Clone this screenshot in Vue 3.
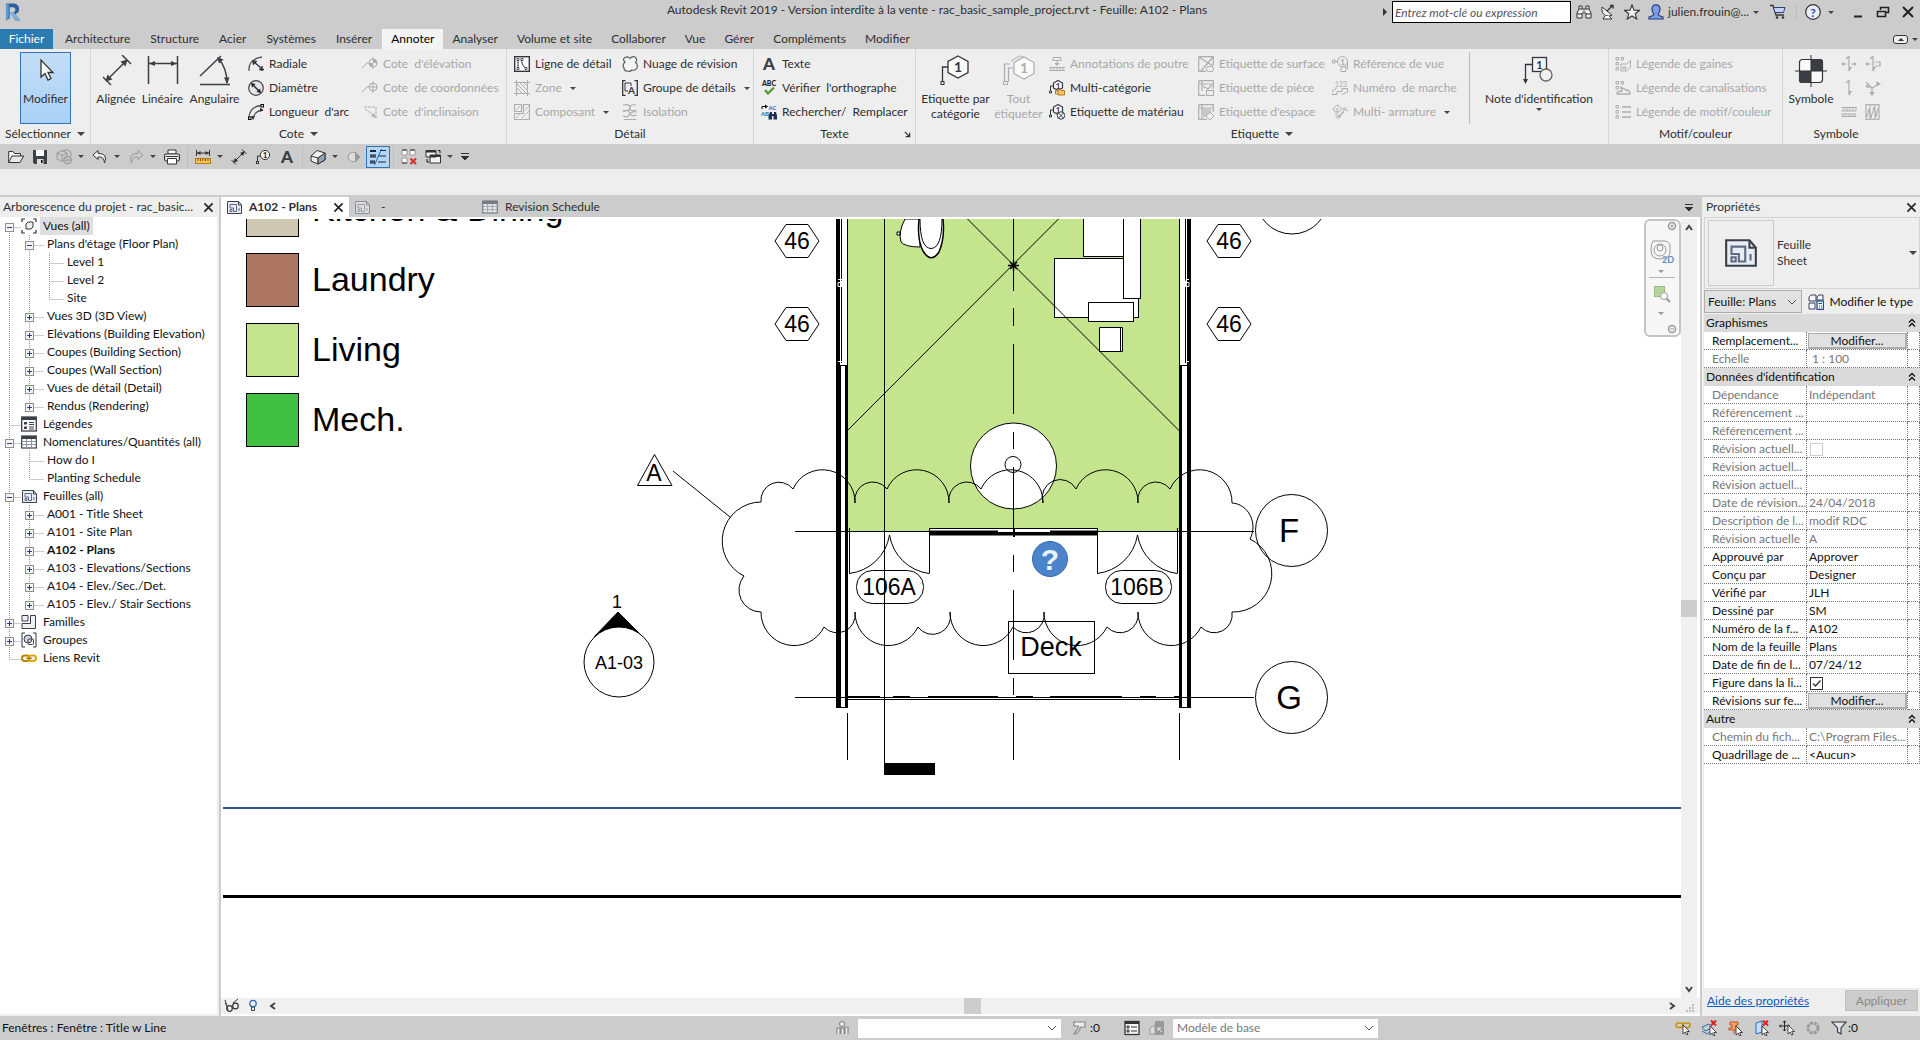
<script setup>
import { ref } from 'vue'

const tabs = ['Architecture', 'Structure', 'Acier', 'Systèmes', 'Insérer', 'Annoter', 'Analyser', 'Volume et site', 'Collaborer', 'Vue', 'Gérer', 'Compléments', 'Modifier']
const activeTab = ref('Annoter')

const D = '#33373d'
const G = '#adadad'
const hex = (cx, cy, w, h, c, sw = 1.2) =>
  `<path d="M${cx} ${cy - h}L${cx + w} ${cy - h / 2}V${cy + h / 2}L${cx} ${cy + h}L${cx - w} ${cy + h / 2}V${cy - h / 2}Z" fill="#fafafa" stroke="${c}" stroke-width="${sw}"/>`
const one = (x, y, s, c) => `<text x="${x}" y="${y}" font-size="${s}" font-weight="700" fill="${c}" text-anchor="middle">1</text>`
const sheet = (c, f, l) => `<path d="M1.500 3.500V14.500H15.500V6L12.500 2.500H1.500Z" fill="${f}" stroke="${c}"/><path d="M12.500 2.500V6H15" fill="none" stroke="${c}"/><path d="M4 5.500H10.500V12.500H7.500V9H4Z M4 10.500H6V12.500H4Z M13 9V12" fill="none" stroke="${l}"/>`
const cursor = (x, y) => `<path transform="translate(${x} ${y})" d="M0 0V9L2.200 7L3.600 10L5 9.400L3.700 6.500H6.500Z" fill="#fff" stroke="#222" stroke-width=".8"/>`
const cross = (x, y) => `<path d="M${x} ${y}L${x + 5} ${y + 5}M${x + 5} ${y}L${x} ${y + 5}" stroke="#d22" stroke-width="2"/>`

const I = {
  logo: `<path d="M1 0H10Q15 1 15 6Q15 10 11 11L16 18H11L5 9H9Q11 9 11 6.500Q11 4 8 4H5V16L1 18Z" fill="#2c5f9e"/><path d="M1 0H4V16L1 18Z" fill="#5d9bd5"/><path d="M5 9H9L16 18H11Z" fill="#7fb0dc"/>`,
  binoc: `<path d="M3 2H6V5H10V2H13V5L15 9V14H10V9H6V14H1V9L3 5Z" fill="#eee" stroke="#333"/><path d="M1 10H6M10 10H15M3 5H6M10 5H13M7 7H9" stroke="#333"/>`,
  dish: `<path d="M2 3Q1 9 5.500 11.500Q9 13 12 11Z" fill="#eee" stroke="#333"/><path d="M7 7L12 2M10 1.500H13V4.500" fill="none" stroke="#333" stroke-width="1.400"/><path d="M5 12L3 15H12L9 12" fill="#fff" stroke="#333"/>`,
  star: `<path d="M8 1L10 6.200L15.500 6.400L11.200 9.800L12.700 15L8 12L3.300 15L4.800 9.800L.5 6.400L6 6.200Z" fill="#f4f4f4" stroke="#333" stroke-width="1.100"/>`,
  user: `<path d="M8 .8Q12 .8 12 5Q12 8 10 10Q10 11.500 15 13V15H1V13Q6 11.500 6 10Q4 8 4 5Q4 .8 8 .8Z" fill="#7e9fe8" stroke="#2b3f78" stroke-width="1.200"/>`,
  cart: `<path d="M0 1.500H3L6 11H14" fill="none" stroke="#333" stroke-width="1.300"/><path d="M3.500 3.500H15L13.500 8.500H5Z" fill="#c6d2f5" stroke="#2b3f78"/><circle cx="7" cy="13.500" r="1.300" fill="#333"/><circle cx="13" cy="13.500" r="1.300" fill="#333"/>`,
  help: `<circle cx="8" cy="8" r="7.300" fill="#e9eef8" stroke="#333" stroke-width="1.200"/><text x="8" y="12.500" font-size="12" font-weight="700" fill="#1e4fa5" text-anchor="middle">?</text>`,
  min: `<path d="M4 12.500H12" stroke="#222" stroke-width="2"/>`,
  restore: `<path d="M5.500 6V3.500H13.500V8.500H11M2.500 7.500H10.500V12.500H2.500Z" fill="none" stroke="#222" stroke-width="1.600"/>`,
  close: `<path d="M3 3L13 13M13 3L3 13" stroke="#222" stroke-width="2"/>`,
  modify: `<path d="M11 5V22L15 18.500L18 25L21 23.500L18 17.500H23Z" fill="#fff" stroke="#333" stroke-width="1.300"/>`,
  aligned: `<path d="M6 26L27 5M3 22L11 30M22 0L31 9" stroke="#3b3f45" stroke-width="1.500"/><path d="M5.500 26.500L7.500 19.500L12.500 24.500ZM27.500 4.500L25.500 11.500L20.500 6.500Z" fill="#3b3f45"/>`,
  linear: `<path d="M1.500 1V29M30.500 1V29M2 8.500H30" stroke="#3b3f45" stroke-width="1.500"/><path d="M2 8.500L8 6V11ZM30 8.500L24 6V11Z" fill="#3b3f45"/>`,
  angular: `<path d="M1 29.500H31M1 21L22 1M19 3Q28 13 28 28" fill="none" stroke="#3b3f45" stroke-width="1.500"/><path d="M18 2L24.500 4.500L20 8.500ZM28 29L25 22.500H30.500Z" fill="#3b3f45"/>`,
  tag: `<path d="M8 12H2.500V27" fill="none" stroke="${D}" stroke-width="1.300"/><rect x="1" y="26.500" width="3" height="3" fill="#eee" stroke="${D}"/>${hex(18, 12, 10, 11, D, 1.3)}${one(18, 17, 14, D)}`,
  tagall: `<path d="M7 9H1.500V26M10 13H5.500V27" fill="none" stroke="${G}" stroke-width="1.200"/><rect x=".5" y="26.500" width="4" height="3" fill="#eee" stroke="${G}"/><path d="M8 6L17 .8L25 4" fill="none" stroke="${G}"/>${hex(21, 13, 10, 11, G)}${one(21, 18, 14, G)}`,
  keynote: `<path d="M9 9.500H2.500V26" fill="none" stroke="${D}" stroke-width="1.300"/><path d="M2.500 29L0 24H5Z" fill="${D}"/><rect x="9.500" y="2.500" width="14" height="14" fill="#f4f4f4" stroke="${D}" stroke-width="1.300"/>${one(16.5, 13.5, 11, D)}<circle cx="23" cy="20" r="6" fill="#f0f0f0" stroke="#666" stroke-width="1.300"/>`,
  symbol: `<rect x="4.500" y="4.500" width="23" height="23" rx="3" fill="#f8f8f8" stroke="#333" stroke-width="1.200"/><path d="M16 4H25Q28 4 28 7V16H16ZM16 16V28H7Q4 28 4 25V16Z" fill="#3a3d42"/><path d="M16 0V32M0 16H32" stroke="#333"/>`,
  radial: `<path d="M1 15Q0 3 14 1" fill="none" stroke="#555" stroke-width="1.300"/><path d="M5 5L14 13M14 10V15M11 13.500H16" stroke="${D}" stroke-width="1.400"/><path d="M4 4L9.500 5L5 9.500Z" fill="${D}"/>`,
  diameter: `<circle cx="8" cy="8" r="7.300" fill="#e4e4e4" stroke="#444" stroke-width="1.200"/><path d="M4 4L12 12" stroke="#222" stroke-width="1.400"/><path d="M3 3L7.500 4L4 7.500ZM13 13L8.500 12L12 8.500Z" fill="#222"/>`,
  arc: `<path d="M1 13Q2 2 14 1.500M5 15Q6 7 15 6" fill="none" stroke="#555" stroke-width="1.300"/><rect x="13" y=".5" width="2.500" height="2.500" fill="#fff" stroke="#000"/><rect x=".5" y="13" width="2.500" height="2.500" fill="#fff" stroke="#000"/><path d="M15.500 6L12 3.800V8ZM5 16L3 12H7Z" fill="#333"/>`,
  spotElev: `<path d="M0 12L5 7H16M11 1V13" fill="none" stroke="${G}"/><circle cx="11" cy="7" r="4" fill="#eee" stroke="${G}"/><path d="M11 3A4 4 0 0 1 15 7H11ZM11 11A4 4 0 0 1 7 7H11Z" fill="${G}"/>`,
  spotCoord: `<path d="M0 12L5 7H16M11 1V13" fill="none" stroke="${G}"/><circle cx="11" cy="7" r="4" fill="none" stroke="${G}"/>`,
  slope: `<path d="M2 3H14V14M3 5L13 12" fill="none" stroke="${G}" stroke-dasharray="3 1"/><path d="M14 14L9 12L12 9Z" fill="${G}"/>`,
  detailLine: `<rect x=".7" y=".7" width="14.600" height="14.600" fill="#fff" stroke="${D}" stroke-width="1.400"/><path d="M4 3V13M7 3Q8 10 12 13" fill="none" stroke="${D}"/><path d="M3 2.500H5V4.500H3ZM3 11.500H5V13.500H3ZM7 2.500H9V4.500H7ZM11 11.500H13V13.500H11Z" fill="#fff" stroke="${D}" stroke-width=".8"/>`,
  region: `<path d="M0 2.500H16M0 13.500H16M2.500 0V16M13.500 0V16" stroke="${G}"/><path d="M3 8L8 13M3 4L12 13M6 3L13 10M10 3L13 6" stroke="${G}"/>`,
  comp: `<path d="M.5 .5H7.500V7.500H.5ZM9.500 .5H15.500V15.500H.5V9.500H9.500Z" fill="none" stroke="${G}" stroke-width="1.200"/><path d="M2 6L6 2M11 6L15 2M2 14L6 10M8 14L15 7" stroke="${G}" stroke-width=".8"/>`,
  cloud: `<path d="M3 6Q0 3 3 1.500Q6 0 8 2.500Q10 0 13 1Q16 3 13.500 6.500Q16 8 15 12Q13 15 10 14Q8 16 5 15Q2 15 2 12Q0 9 3 6Z" fill="#f4f4f4" stroke="#5a5d62" stroke-width="1.200"/>`,
  group: `<path d="M3.500 .7H.7V15.300H3.500M12.500 .7H15.300V15.300H12.500" fill="none" stroke="${D}" stroke-width="1.300"/><path d="M3 3H9V6M3 3V11H6" fill="none" stroke="${D}"/><text x="9.500" y="13.500" font-size="10" font-weight="700" fill="${D}" text-anchor="middle">A</text>`,
  insul: `<path d="M1 1.500Q8 -1 8 4Q8 8 14 6M1 8Q6 5 8 9Q9 13 15 11M14 1Q8 0 8 4Q7 8 1 6M15 8Q9 7 7 11Q6 14 1 12M2 15.500H14" fill="none" stroke="${G}" stroke-width="1.100"/>`,
  text: `<text x="8" y="14" font-size="17" font-weight="900" fill="#3a3d42" text-anchor="middle">A</text>`,
  abc: `<text x="8" y="6" font-size="7" font-weight="900" fill="#222" text-anchor="middle">ABC</text><path d="M4 10L7 13.500L13 7.500" fill="none" stroke="#4d9a2a" stroke-width="2.200"/>`,
  find: `<text x="11.500" y="6" font-size="6" font-weight="700" fill="#2a68c0" text-anchor="middle">AC</text><text x="4" y="12" font-size="6" font-weight="700" fill="#2a68c0" text-anchor="middle">AB</text><path d="M1 5V2.500H4" fill="none" stroke="#000"/><path d="M7 2.500L4 .5V4.500Z"/><path d="M9 8H11V10H13V8H15L16 12V15.500H12.500V12H11V15.500H7.500V12Z" fill="#1d2f50"/>`,
  beam: `<path d="M4 1.500H12V4.500H4ZM8 5V9M0 11.500H16M0 14.500H16" fill="none" stroke="${G}"/><path d="M8 10L5.500 7H10.500Z" fill="${G}"/><path d="M1 13H15" stroke="${G}" stroke-dasharray="2 1"/>`,
  multi: `<path d="M5 6H1.500V12" fill="none" stroke="${D}"/><path d="M.5 11H2.500V13H.5Z" fill="#fff" stroke="${D}"/>${hex(9, 5.5, 4.5, 5, D)}${one(9, 9, 8, D)}<path d="M6.500 8V14H9M6.500 11H9" fill="none" stroke="#b8741a"/><path d="M9 9.500H11L12 10.500H15.500V15H9Z" fill="#f6c667" stroke="#b8741a"/>`,
  mat: `<path d="M5 6H1.500V12" fill="none" stroke="${D}"/><path d="M.5 11H2.500V13H.5Z" fill="#fff" stroke="${D}"/>${hex(9, 5.5, 4.5, 5, D)}${one(9, 9, 8, D)}<circle cx="12" cy="11.500" r="3.700" fill="#fff" stroke="${D}"/><path d="M9.500 9L14.500 14M14.500 9L9.500 14" stroke="${D}"/>`,
  surf: `<path d="M.7 .7H15.300V9M.7 .7V15.300H8M1 1L15 10M15 1L3 15" fill="none" stroke="${G}" stroke-width="1.200"/><rect x="8.500" y="10.500" width="7" height="5" rx="2" fill="#eee" stroke="${G}"/>`,
  room: `<path d="M.7 .7H15.300V9M.7 .7V15.300H7M4 1V11M1 4H15M5 6L10 9L14 5" fill="none" stroke="${G}" stroke-width="1.200"/><rect x="8.500" y="10.500" width="7" height="5" fill="#eee" stroke="${G}"/>`,
  space: `<path d="M.7 .7H15.300V8M.7 .7V15.300H9M4 1V15M1 4H15" fill="none" stroke="${G}" stroke-width="1.200"/><path d="M5 5H13V9L9 13H5Z" fill="${G}" opacity=".6"/><path d="M12 8L16 12L12 16L8 12Z" fill="#eee" stroke="${G}"/>`,
  viewref: `<path d="M.5 4H3V7H.5ZM3 5.500H6" fill="none" stroke="${G}"/><circle cx="10.500" cy="5.500" r="5" fill="none" stroke="${G}"/>${one(10.5, 9, 8, G)}<path d="M9 11H14V15.500H9ZM15.500 6V13" fill="#eee" stroke="${G}"/>`,
  tread: `<path d="M0 14.500H5V11.500H10V8.500H15.500V12L10 14.500M0 14.500V11L4 9V7" fill="none" stroke="${G}"/><text x="9" y="7" font-size="7" fill="${G}" text-anchor="middle">123</text>`,
  rebar: `<path d="M5 .8L9.500 5L5 9.500L.8 5Z" fill="none" stroke="${G}"/>${one(5, 7.5, 6, G)}<path d="M6 15L14 3M3 10L9 13M10 4L16 7M4 14L12 8" stroke="${G}"/>`,
  duct: `<path d="M1 1.500H3.500V4H1ZM6 1.500H8.500V4H6ZM1 6.500H3.500V9H1ZM1 11.500H3.500V14H1Z" fill="none" stroke="${G}"/><path d="M6 8H12L15.500 4.500V11L12 15H6ZM8 11H11V13H8Z" fill="none" stroke="${G}"/>`,
  pipe: `<path d="M1 1.500H3.500V4H1ZM6 1.500H8.500V4H6ZM1 6.500H3.500V9H1Z" fill="none" stroke="${G}"/><path d="M6 7L11 10Q15 10 15 14H2Q2 11 7 11Z" fill="none" stroke="${G}" stroke-width="1.300"/>`,
  legend: `<path d="M1 1.500H3.500V4H1ZM1 6.500H3.500V9H1ZM1 11.500H3.500V14H1Z" fill="none" stroke="${G}"/><path d="M7 3H16M7 8H16M7 13H16" stroke="${G}" stroke-width="1.300"/>`,
  s1: `<path d="M8 0V15M1 8H6M10 8H15M5 3L8 0" stroke="${G}" stroke-width="1.200"/><path d="M0 8L3 6V10ZM16 8L13 6V10ZM8 16L11 11H8Z" fill="${G}"/>`,
  s2: `<path d="M8 0V15M1 8H6M10 6H15V10H10M5 3L8 0" fill="none" stroke="${G}" stroke-width="1.200"/><path d="M0 8L3 6V10ZM8 16L11 11H8Z" fill="${G}"/>`,
  s3: `<path d="M8 0V15M5 3L8 0" stroke="${G}" stroke-width="1.200"/><path d="M8 16L11 11H8Z" fill="${G}"/>`,
  s4: `<path d="M7 15V8L1 2M7 8L14 4" fill="none" stroke="${G}" stroke-width="1.200"/><path d="M16 4L11 1L12 6ZM0 7L5 8L3 4ZM7 16L10 12H4Z" fill="${G}"/>`,
  s5: `<path d="M.5 3.500H15.500M.5 12.500H15.500M.5 7H15M.5 10H15" stroke="${G}"/><path d="M3 3V7M6 3V7M9 3V7M12 3V7M15 3V7M2 10V13M5 10V13M8 10V13M11 10V13M14 10V13" stroke="${G}"/>`,
  s6: `<rect x="1" y=".7" width="13" height="14.600" fill="none" stroke="${G}" stroke-width="1.200"/><path d="M5 1V15M10 1V15M2 13L4 5L6 14L9 3L11 13L13 4" fill="none" stroke="${G}"/>`,
  open: `<path d="M.7 13.500V2.500H5L6.500 4.500H12.500V7" fill="#f4f4f4" stroke="#333"/><path d="M.7 13.500L4 7H15.700L12 13.500Z" fill="#e8e8e8" stroke="#333"/>`,
  save: `<path d="M1 1H15V15H2.500L1 13.500Z" fill="#3b3f46"/><path d="M4 1H12V7H4Z" fill="#fff"/><path d="M5 10H11.500V15H5Z" fill="#ddd"/><path d="M9 11H10.500V14H9Z"/>`,
  sync: `<path d="M1 4L6 1.500L11 4V10L6 12.500L1 10ZM1 4L6 6.500L11 4M6 6.500V12M7 2L11 .5L15 3V7" fill="none" stroke="#999"/><circle cx="11.500" cy="11" r="4.500" fill="#a5a5a5"/><path d="M9 11Q11 7.500 14 10M14 12Q12 14.500 9.500 12.500" fill="none" stroke="#ddd"/>`,
  undo: `<path d="M6 1.500L1 6L6 10.500V8Q12 7 12.500 14Q16.500 4.500 6 4.300Z" fill="#f4f4f4" stroke="#333"/>`,
  redo: `<path d="M10 1.500L15 6L10 10.500V8Q4 7 3.500 14Q-.5 4.500 10 4.300Z" fill="none" stroke="#999"/>`,
  print: `<path d="M4 1H12V5H4Z" fill="#fff" stroke="#333"/><rect x=".6" y="5" width="14.800" height="7" rx="1.500" fill="#f2f2f2" stroke="#333" stroke-width="1.200"/><path d="M3.500 9.500H12.500V15H3.500Z" fill="#fff" stroke="#333"/><path d="M2 7.500H14" stroke="#333"/>`,
  measure: `<path d="M1.500 1V7M14.500 1V7M2 4H14" stroke="#333"/><path d="M2 4L5.500 2V6ZM14 4L10.500 2V6Z" fill="#333"/><rect x=".5" y="9.500" width="15" height="5" fill="#fbc24d" stroke="#b97a12"/><path d="M3 10V12M5.500 10V12M8 10V12M10.500 10V12M13 10V12" stroke="#7a4c00"/>`,
  alignedS: `<path d="M2.500 13.500L13.500 2.500M.5 11L5 15.500M11 .5L15.500 5" stroke="#333"/><path d="M2 14L4 9L7 12ZM14 2L12 7L9 4Z" fill="#333"/>`,
  tagS: `<path d="M6 7H2.500V13" fill="none" stroke="#333"/><rect x="1.500" y="12.500" width="2" height="2" fill="#fff" stroke="#333"/><circle cx="10" cy="6" r="4.600" fill="#f6f6f6" stroke="#333"/>${one(10, 9, 8, '#222')}`,
  home: `<path d="M1 7L7 1.500L15 4V11L8 15L1 12Z" fill="#f0f0f0" stroke="#333"/><path d="M1 7L8 9V15M8 9L15 4" fill="none" stroke="#333"/><path d="M8 9L15 4V11L8 15Z" fill="#8fa3bb" stroke="#333"/>`,
  section: `<circle cx="7" cy="8" r="4.800" fill="#ddd" stroke="#999"/><path d="M9 2.500L14.500 8L9 13.500Z" fill="#999"/>`,
  thin: `<path d="M0 1.500H6M0 2.500H6M0 6H6M0 7H6M0 8H6M0 12H5M0 13H5M0 14H5" stroke="#1c2535"/><path d="M10 1.500H16M9 7H16M8 13H16" stroke="#1c2535"/><path d="M11.500 0L4.500 16" stroke="#1c63b5"/>`,
  closeh: `<path d="M1 1H6V6H1ZM9 1H14V6H9ZM1 9H6V14H1Z" fill="#fff" stroke="#999"/><path d="M1 1H6M9 1H14M1 14H6" stroke="#333"/><path d="M9.500 9.500L15 15M15 9.500L9.500 15" stroke="#d0342c" stroke-width="2.200"/>`,
  switchw: `<path d="M1 1.500H11V8H1ZM5 6H15.500V14H5Z" fill="#f2f2f2" stroke="#333"/><path d="M1 2.500H11M5 7H15.500" stroke="#333" stroke-width="2"/><path d="M13 1.500H15V4M2 10V13H4" fill="none" stroke="#111"/>`,
  views: `<path d="M1 4V1H4M12 1H15V4M15 12V15H12M4 15H1V12" fill="none" stroke="#333" stroke-width="1.200"/><path d="M5 6L7 4H12V9L10 11H5Z" fill="#eee" stroke="#333"/>`,
  legends: `<rect x=".7" y="1" width="14.600" height="14" fill="#fff" stroke="#3a3f48" stroke-width="1.300"/><path d="M1 2.500H15" stroke="#3a3f48" stroke-width="3"/><path d="M3 6H6V8.500H3ZM3 10.500H6V13H3Z" fill="#3a3f48"/><path d="M8 6.500H13M8 8.500H13M8 11H13M8 13H13" stroke="#3a3f48"/>`,
  sched: `<rect x=".7" y="2" width="14.600" height="12" fill="#fff" stroke="#3a3f48" stroke-width="1.200"/><path d="M1 3.500H15" stroke="#3a3f48" stroke-width="3"/><path d="M1 7.500H15M1 10.500H15M5.500 5V14M10.500 5V14" stroke="#8b93a5"/>`,
  schedOff: `<rect x=".7" y="2" width="14.600" height="12" fill="#e4e4e4" stroke="#777c85" stroke-width="1.200"/><path d="M1 3.500H15" stroke="#777c85" stroke-width="3"/><path d="M1 7.500H15M1 10.500H15M5.500 5V14M10.500 5V14" stroke="#a5abb8"/>`,
  sheet: sheet('#3a3f48', '#e9ecf2', '#5e6b85'),
  sheetOff: sheet('#8a8f97', '#dcdcdc', '#9aa0aa'),
  fams: `<path d="M1 1.500H7V7H1ZM9.500 1.500H14.500V14.500H1V9.500H9.500Z" fill="#eef0f3" stroke="#3a3f48"/>`,
  groups: `<path d="M4 1H1V15H4M12 1H15V15H12" fill="none" stroke="#333"/><circle cx="7" cy="7" r="4" fill="#cfd6df" stroke="#3a3f48"/><rect x="7" y="7" width="5.500" height="5.500" rx="1" fill="none" stroke="#3a3f48"/>`,
  link: `<rect x="1" y="5.500" width="7.500" height="5.500" rx="2.700" fill="none" stroke="#b98500" stroke-width="2"/><rect x="7.500" y="5.500" width="7.500" height="5.500" rx="2.700" fill="none" stroke="#dba511" stroke-width="2"/><path d="M5 8.200H11" stroke="#8a6300"/>`,
  etype: `<path d="M1 3L3 1H8V7H1ZM9 3L11 1H15V6H9ZM1 9H7V15H1Z" fill="#f2f4f8" stroke="#3a4454"/><rect x="9" y="7" width="6.500" height="8.500" fill="#fff" stroke="#1e4f94" stroke-width="1.300"/><path d="M10.500 9.500H14M11 12H12M13 12H14M11 14H12M13 14H14" stroke="#1e4f94"/>`,
  glasses: `<path d="M1 2L4 12M14 1L9 5M1 5L4 9" fill="none" stroke="#333"/><circle cx="5.500" cy="10.500" r="2.800" fill="none" stroke="#333" stroke-width="1.200"/><circle cx="11.500" cy="8" r="2.800" fill="none" stroke="#333" stroke-width="1.200"/>`,
  bulb: `<circle cx="8" cy="5.500" r="3.200" fill="none" stroke="#2770b8" stroke-width="1.300"/><path d="M6.500 9H9.500V12.500H6.500Z" fill="none" stroke="#345" />`,
  worker: `<circle cx="8" cy="4" r="2.500" fill="#eee" stroke="#777"/><path d="M3 14V8H6V14M7 14V8H10V14M11 14V7H14V14" fill="#eee" stroke="#888" stroke-width="1.200"/>`,
  paint: `<path d="M3 2H14V7H9V9L5 14H3L7 8V6H3Z" fill="#eee" stroke="#888" stroke-width="1.200"/>`,
  options: `<rect x="1" y="1.500" width="14" height="13" fill="#f5f5f5" stroke="#333" stroke-width="1.300"/><path d="M1 3H15" stroke="#333" stroke-width="2"/><path d="M3 6H5V8H3ZM3 10H5V12H3ZM7 7H13M7 11H13" fill="none" stroke="#333"/>`,
  excl: `<path d="M1 8L6 5V14H1Z" fill="#ddd" stroke="#999"/><path d="M6 1H15V15H6Z" fill="#999"/><path d="M9 8L13 12M9 11V8H12" fill="none" stroke="#eee"/>`,
  selLink: `<rect x="1" y="3" width="7" height="4.500" rx="2.200" fill="none" stroke="#c89200" stroke-width="1.600"/><rect x="8" y="3" width="7" height="4.500" rx="2.200" fill="none" stroke="#c89200" stroke-width="1.600"/>${cursor(8, 5)}`,
  selUnder: `<path d="M1 7L8 4L11 8L4 11ZM1 11L6 14L13 9" fill="none" stroke="#2a6cb5"/>${cross(10, 0.5)}${cursor(9, 6)}`,
  selPin: `<path d="M3 2H11V5H9V8H12V10H2V8H5V5H3Z" fill="#f4a46a" stroke="#c3501a"/><path d="M7 10V14" stroke="#c3501a"/>${cursor(9, 6)}`,
  selFace: `<path d="M3 3L9 1V12L3 14Z" fill="#bfe0ff" stroke="#2a6cb5"/>${cross(10, 0.5)}${cursor(9, 6)}`,
  selDrag: `<path d="M5.500 1V11M.5 6H10.500M4 2.500L5.500 .8L7 2.500M4 9.500L5.500 11L7 9.500M2 4.500L.5 6L2 7.500M9 4.500L10.500 6" fill="none" stroke="#222"/>${cursor(9, 5)}`,
  ring: `<circle cx="8" cy="8" r="5" fill="none" stroke="#999" stroke-width="3" stroke-dasharray="3 1"/>`,
  filter: `<path d="M1 2H15L10 8V14L6.500 12V8Z" fill="#dfe5ee" stroke="#333" stroke-width="1.100"/>`
}

const panels = [
  { id: 'sel', title: 'Sélectionner', caret: true, cols: [{ big: 'Modifier', icon: 'modify', on: true }] },
  { id: 'cote', title: 'Cote', caret: true, cols: [
    { big: 'Alignée', icon: 'aligned' }, { big: 'Linéaire', icon: 'linear' }, { big: 'Angulaire', icon: 'angular' },
    { rows: [['radial', 'Radiale'], ['diameter', 'Diamètre'], ['arc', "Longueur  d'arc"]] },
    { off: true, rows: [['spotElev', "Cote  d'élévation"], ['spotCoord', 'Cote  de coordonnées'], ['slope', "Cote  d'inclinaison"]] }] },
  { id: 'detail', title: 'Détail', cols: [
    { rows: [['detailLine', 'Ligne de détail'], ['region', 'Zone', 1, 1], ['comp', 'Composant', 1, 1]] },
    { rows: [['cloud', 'Nuage de révision'], ['group', 'Groupe de détails', 0, 1], ['insul', 'Isolation', 1]] }] },
  { id: 'texte', title: 'Texte', launch: true, cols: [
    { rows: [['text', 'Texte'], ['abc', "Vérifier  l'orthographe"], ['find', 'Rechercher/  Remplacer']] }] },
  { id: 'etiq', title: 'Etiquette', caret: true, cols: [
    { big: 'Etiquette par\ncatégorie', icon: 'tag' }, { big: 'Tout\nétiqueter', icon: 'tagall', off: true },
    { rows: [['beam', 'Annotations de poutre', 1], ['multi', 'Multi-catégorie'], ['mat', 'Etiquette de matériau']] },
    { off: true, rows: [['surf', 'Etiquette de surface'], ['room', 'Etiquette de pièce'], ['space', "Etiquette d'espace"]] },
    { off: true, rows: [['viewref', 'Référence de vue'], ['tread', 'Numéro  de marche'], ['rebar', 'Multi- armature', 1, 1]] },
    { big: "Note d'identification", icon: 'keynote', caret: true, sep: true }] },
  { id: 'motif', title: 'Motif/couleur', cols: [
    { off: true, rows: [['duct', 'Légende de gaines'], ['pipe', 'Légende de canalisations'], ['legend', 'Légende de motif/couleur']] }] },
  { id: 'symb', title: 'Symbole', cols: [
    { big: 'Symbole', icon: 'symbol' },
    { off: true, rows: [['s1', ''], ['s3', ''], ['s5', '']] }, { off: true, rows: [['s2', ''], ['s4', ''], ['s6', '']] }] }
]

const qat = [
  { i: 'open', n: 'Ouvrir' }, { i: 'save', n: 'Enregistrer' }, { i: 'sync', n: 'Synchroniser', c: 1 }, { i: 'undo', n: 'Annuler', c: 1 },
  { i: 'redo', n: 'Rétablir', c: 1 }, { i: 'print', n: 'Imprimer' }, { s: 1 }, { i: 'measure', n: 'Mesurer', c: 1 },
  { i: 'alignedS', n: 'Cote alignée' }, { i: 'tagS', n: 'Etiquette' }, { i: 'text', n: 'Texte' }, { s: 1 }, { i: 'home', n: 'Vue 3D', c: 1 },
  { i: 'section', n: 'Coupe' }, { i: 'thin', n: 'Lignes fines', on: 1 }, { s: 1 }, { i: 'closeh', n: 'Fermer inactives' }, { i: 'switchw', n: 'Changer de fenêtre', c: 1 }
]

// d: depth, x: expander, k: connector shape ('first' starts at the row's middle, 'last' ends there)
const tree = [
  { t: 'Vues (all)', d: 0, x: '-', i: 'views', k: 'first', sel: true },
  { t: "Plans d'étage (Floor Plan)", d: 1, x: '-' },
  { t: 'Level 1', d: 2 }, { t: 'Level 2', d: 2 }, { t: 'Site', d: 2, k: 'last' },
  { t: 'Vues 3D (3D View)', d: 1, x: '+' }, { t: 'Elévations (Building Elevation)', d: 1, x: '+' },
  { t: 'Coupes (Building Section)', d: 1, x: '+' }, { t: 'Coupes (Wall Section)', d: 1, x: '+' },
  { t: 'Vues de détail (Detail)', d: 1, x: '+' }, { t: 'Rendus (Rendering)', d: 1, x: '+', k: 'last' },
  { t: 'Légendes', d: 0, i: 'legends' },
  { t: 'Nomenclatures/Quantités (all)', d: 0, x: '-', i: 'sched' },
  { t: 'How do I', d: 1 }, { t: 'Planting Schedule', d: 1, k: 'last' },
  { t: 'Feuilles (all)', d: 0, x: '-', i: 'sheet' },
  { t: 'A001 - Title Sheet', d: 1, x: '+' }, { t: 'A101 - Site Plan', d: 1, x: '+' }, { t: 'A102 - Plans', d: 1, x: '+', bold: true },
  { t: 'A103 - Elevations/Sections', d: 1, x: '+' }, { t: 'A104 - Elev./Sec./Det.', d: 1, x: '+' }, { t: 'A105 - Elev./ Stair Sections', d: 1, x: '+', k: 'last' },
  { t: 'Familles', d: 0, x: '+', i: 'fams' }, { t: 'Groupes', d: 0, x: '+', i: 'groups' },
  { t: 'Liens Revit', d: 0, i: 'link', k: 'last' }
]
const guideWidth = n => (n.d === 0 ? 21 : 24 + n.d * 20)
function guidePath(n) {
  const x = 9.5 + n.d * 20
  let p = `M${x} ${n.k === 'first' ? 10 : 0}V${n.k === 'last' ? 10 : 18}M${x} 10.5H${guideWidth(n)}`
  for (let k = 0; k < n.d; k++) p += `M${9.5 + k * 20} 0V18`
  return p
}

const props = [
  { g: 'Graphismes' }, { n: 'Remplacement...', b: 1 }, { n: 'Echelle', v: ' 1 : 100', off: 1 },
  { g: "Données d'identification" }, { n: 'Dépendance', v: 'Indépendant', off: 1 }, { n: 'Référencement ...', off: 1 },
  { n: 'Référencement ...', off: 1 }, { n: 'Révision actuell...', off: 1, c: 0 }, { n: 'Révision actuell...', off: 1 }, { n: 'Révision actuell...', off: 1 },
  { n: 'Date de révision...', v: '24/04/2018', off: 1 }, { n: 'Description de l...', v: 'modif RDC', off: 1 }, { n: 'Révision actuelle', v: 'A', off: 1 },
  { n: 'Approuvé par', v: 'Approver' }, { n: 'Conçu par', v: 'Designer' }, { n: 'Vérifié par', v: 'JLH' }, { n: 'Dessiné par', v: 'SM' },
  { n: 'Numéro de la f...', v: 'A102' }, { n: 'Nom de la feuille', v: 'Plans' }, { n: 'Date de fin de l...', v: '07/24/12' },
  { n: 'Figure dans la li...', c: 1 }, { n: 'Révisions sur fe...', b: 1 },
  { g: 'Autre' }, { n: 'Chemin du fich...', v: 'C:\\Program Files...', off: 1 }, { n: 'Quadrillage de ...', v: '<Aucun>' }
]

const rooms = [
  { n: 'Kitchen & Dining', c: '#cfc8b2', y: 183 }, { n: 'Laundry', c: '#ab7561', y: 253 },
  { n: 'Living', c: '#c4e48d', y: 323 }, { n: 'Mech.', c: '#41bf41', y: 393 }
]
const hexTags = [[797, 241], [797, 324], [1229, 241], [1229, 324]]

// revision cloud: alternating short and long arcs, clockwise
const cloud = (() => {
  let p = 'M761 502'
  for (const x of [761, 855, 949, 1044, 1138]) p += `A18 18 0 0 1 ${x + 32} 489A32.4 32.4 0 0 1 ${x + 94} 503`
  p += 'A22 24 0 0 1 1250 539A38.4 38.4 0 0 1 1232 612'
  for (const x of [1232, 1138, 1044, 949, 855]) p += `A18 18 0 0 1 ${x - 31} 627A33.2 33.2 0 0 1 ${x - 94} 612`
  return p + 'A22 22 0 0 1 744 576A39 39 0 0 1 761 502'
})()
</script>

<template>
  <div class="app">
    <header class="titlebar">
      <svg class="logo" viewBox="0 0 17 18" v-html="I.logo" />
      <h1>Autodesk Revit 2019 - Version interdite à la vente - rac_basic_sample_project.rvt - Feuille: A102 - Plans</h1>
      <div class="tools">
        <span class="play"></span>
        <input class="search" type="text" aria-label="Recherche" placeholder="Entrez mot-clé ou expression">
        <button v-for="b in ['binoc', 'dish', 'star']" :key="b" class="tool" :aria-label="b"><svg class="i16" viewBox="0 0 16 16" v-html="I[b]" /></button>
        <button class="tool user"><svg class="i16" viewBox="0 0 16 16" v-html="I.user" /><span>julien.frouin@...</span><i class="caret"></i></button>
        <button class="tool cart" aria-label="cart"><svg class="i16" viewBox="0 0 16 16" v-html="I.cart" /></button>
        <button class="tool help" aria-label="Aide"><svg class="i16" viewBox="0 0 16 16" v-html="I.help" /><i class="caret"></i></button>
        <button v-for="b in ['min', 'restore', 'close']" :key="b" class="win" :aria-label="b"><svg class="i16" viewBox="0 0 16 16" v-html="I[b]" /></button>
      </div>
    </header>

    <nav class="tabs">
      <button class="tab file">Fichier</button>
      <button v-for="t in tabs" :key="t" class="tab" :class="{ active: t === activeTab }" @click="activeTab = t">{{ t }}</button>
      <button class="collapse" aria-label="Réduire le ruban"><span><i class="up"></i></span><i class="caret"></i></button>
    </nav>

    <section class="ribbon">
      <div v-for="p in panels" :key="p.id" class="panel" :class="p.id">
        <div class="body">
          <template v-for="(c, ci) in p.cols" :key="ci">
            <button v-if="c.big" class="big" :class="{ off: c.off, on: c.on, sep: c.sep }">
              <svg class="i32" viewBox="0 0 32 32" v-html="I[c.icon]" />
              <span>{{ c.big }}</span>
              <i v-if="c.caret" class="caret"></i>
            </button>
            <div v-else class="col">
              <button v-for="r in c.rows" :key="r[0]" class="row" :class="{ off: c.off || r[2] }" :aria-label="r[1] || r[0]">
                <svg class="i16" viewBox="0 0 16 16" v-html="I[r[0]]" />
                <span v-if="r[1]">{{ r[1] }}</span>
                <i v-if="r[3]" class="caret"></i>
              </button>
            </div>
          </template>
        </div>
        <div class="ptitle">{{ p.title }}<i v-if="p.caret" class="caret wide"></i>
          <svg v-if="p.launch" class="launch" viewBox="0 0 8 8"><path d="M1 1L6 6M6.500 2V6.500H2" fill="none" stroke="#333" stroke-width="1.400" /></svg>
        </div>
      </div>
    </section>

    <div class="qat">
      <template v-for="(q, qi) in qat" :key="qi">
        <span v-if="q.s" class="qsep"></span>
        <button v-else class="q" :class="{ on: q.on, drop: q.c }" :aria-label="q.n">
          <svg class="i16" viewBox="0 0 16 16" v-html="I[q.i]" /><i v-if="q.c" class="caret"></i>
        </button>
      </template>
      <button class="q more" aria-label="Personnaliser"><i class="caret wide bar"></i></button>
    </div>
    <div class="options"></div>

    <main class="main">
      <aside class="browser">
        <div class="dock"><span>Arborescence du projet - rac_basic...</span><button aria-label="Fermer"><svg class="x" viewBox="0 0 16 16" v-html="I.close" /></button></div>
        <ul class="tree">
          <li v-for="(n, ni) in tree" :key="ni">
            <svg class="guide" :width="guideWidth(n)" height="18">
              <path :d="guidePath(n)" fill="none" stroke="#999" stroke-dasharray="1 1" />
              <g v-if="n.x" :transform="`translate(${5 + n.d * 20} 6)`">
                <rect x=".5" y=".5" width="8" height="8" fill="#f4f4f4" stroke="#8f8f8f" />
                <path :d="n.x === '+' ? 'M2 4.500H7M4.500 2V7' : 'M2 4.500H7'" stroke="#2b3f86" />
              </g>
            </svg>
            <svg v-if="n.i" class="i16" viewBox="0 0 16 16" v-html="I[n.i]" />
            <span class="lab" :class="{ sel: n.sel, bold: n.bold }">{{ n.t }}</span>
          </li>
        </ul>
      </aside>

      <section class="doc">
        <div class="doctabs">
          <button class="dt on"><svg class="i16" viewBox="0 0 16 16" v-html="I.sheet" /><span>A102 - Plans</span><svg class="x" viewBox="0 0 16 16" v-html="I.close" /></button>
          <button class="dt second"><svg class="i16" viewBox="0 0 16 16" v-html="I.sheetOff" /><span>-</span></button>
          <button class="dt third"><svg class="i16" viewBox="0 0 16 16" v-html="I.schedOff" /><span>Revision Schedule</span></button>
          <i class="caret wide bar"></i>
        </div>
        <div class="view">
          <div class="sheet">
            <svg class="drawing" viewBox="222 219 1460 779" preserveAspectRatio="xMinYMin slice" fill="none" stroke="#000">
              <g v-for="r in rooms" :key="r.n">
                <rect x="246.500" :y="r.y + 0.5" width="52" height="53" :fill="r.c" />
                <text x="312" :y="r.y + 38" font-size="34">{{ r.n }}</text>
              </g>

              <rect x="848" y="219" width="331" height="312" fill="#c4e48d" stroke="none" />
              <path d="M847.500 219V365M1179.500 219V365" />
              <circle cx="1013.500" cy="466" r="43" fill="#fff" />
              <circle cx="1013" cy="464.500" r="8" />
              <g fill="#fff">
                <path d="M920 219H905Q898 232 901 242Q905 247 920 247ZM897 232H900V235H897Z" />
                <path d="M919 219Q917 240 923 251Q931 264 939 252Q945 238 943 219Z" stroke-width="1.500" />
                <path d="M920 219Q920 248 931 248.500Q942 248 942 219" />
                <rect x="1083.500" y="210.500" width="40" height="46" />
                <rect x="1054.500" y="258.500" width="84" height="59" />
                <rect x="1123.500" y="210.500" width="17" height="88" />
                <rect x="1088.500" y="302.500" width="45" height="19" />
                <path d="M1099.500 327.500H1122.500V351.500H1099.500ZM1120.500 328V351" />
              </g>
              <path d="M848 430L1058.500 219M967.500 219L1179.500 431" />
              <path d="M1008 265.500H1019M1013.500 260V271M1010 262L1017 269M1017 262L1010 269" stroke-width="1.500" />
              <path d="M1013.500 219V291M1013.500 308V326M1013.500 344V414M1013.500 432V449M1013.500 467V537M1013.500 555V572M1013.500 590V660M1013.500 678V695M1013.500 713V760M847.500 713V760M1179.500 713V760M884.500 219V763" />
              <rect x="884" y="763" width="51" height="12" fill="#000" stroke="none" />

              <path d="M836 219H840V365H836ZM1187 219H1191V365H1187ZM836 365H841V708H836ZM845 365H848V708H845ZM1179 365H1182V708H1179ZM1187 365H1191V708H1187Z" fill="#000" stroke="none" />
              <path d="M841.500 219V281M841.500 287V363M1185.500 219V281M1185.500 287V363M840 365.500H848M1179 365.500H1187M836 707.500H848M1179 707.500H1191" />
              <path d="M838 279.500H842V282.500H838V286.500H842M838 361.500H842M1189 279.500H1186V282.500H1189V286.500H1186M1186 361.500H1189" stroke="#fff" />

              <path d="M795 531.500H1254M795 697.500H1254M848 699.500H1179" />
              <path d="M848 697H880M893 697H910M928 697H998M1016 697H1033M1050 697H1122M1140 697H1156M1174 697H1179" stroke-width="2" />
              <path d="M929.500 528.500H1097.500V535H929.500Z" fill="#fff" />
              <path d="M930 533.500H1097" stroke-width="3" />
              <path d="M930 531.500H998M1014 528V537M1050 531.500H1097" stroke-width="2" />
              <path d="M849.500 528V573.500M929.500 528V573.500M1097.500 528V573.500M1177.500 528V573.500M849 573.500A46 46 0 0 0 889.500 535A46 46 0 0 0 929 573.500M1097 573.500A46 46 0 0 0 1137.500 535A46 46 0 0 0 1177 573.500" />
              <rect x="856.500" y="570.500" width="67" height="33" rx="16" />
              <rect x="1105.500" y="570.500" width="66" height="33" rx="16" />

              <path :d="cloud" />
              <path d="M654.500 454.500L672 485.500H637.500ZM673 471L730 517" />
              <g v-for="(h, hi) in hexTags" :key="hi">
                <path :d="`M${h[0] - 22} ${h[1]}L${h[0] - 11} ${h[1] - 16.5}H${h[0] + 11}L${h[0] + 22} ${h[1]}L${h[0] + 11} ${h[1] + 16.5}H${h[0] - 11}Z`" />
                <text :x="h[0]" :y="h[1] + 8" font-size="23" text-anchor="middle">46</text>
              </g>
              <circle cx="1292" cy="198" r="36" />
              <circle cx="1291.500" cy="530.500" r="36" />
              <circle cx="1291.500" cy="697.500" r="36" />
              <path d="M618 612L594 637A35 35 0 0 1 643 637Z" fill="#000" />
              <circle cx="619" cy="662" r="35" fill="#fff" />
              <rect x="1008.500" y="621.500" width="86" height="52" />
              <g text-anchor="middle">
                <text x="1289" y="542" font-size="33">F</text>
                <text x="1289" y="709" font-size="33">G</text>
                <text x="654" y="481" font-size="23">A</text>
                <text x="617" y="608" font-size="18">1</text>
                <text x="619" y="669" font-size="18">A1-03</text>
                <text x="889" y="595" font-size="23">106A</text>
                <text x="1137" y="595" font-size="23">106B</text>
                <text x="1051" y="656" font-size="27">Deck</text>
              </g>
              <circle cx="1050" cy="559" r="17.500" fill="#4c84cb" stroke="#3568ae" />
              <text class="q-mark" x="1050" y="570" font-size="30" text-anchor="middle">?</text>

              <path d="M223 808H1682" stroke="#34509a" stroke-width="2" />
              <path d="M223 896.500H1682" stroke-width="3" />
            </svg>
            <div class="navbar">
              <svg viewBox="0 0 33 114" fill="none" stroke="#999">
                <circle cx="26" cy="5" r="3.500" stroke-width="1.500" /><path d="M24.500 3.500L27.500 6.500M27.500 3.500L24.500 6.500" />
                <path d="M7 20H18Q24 20 24 26V32Q23 38 14 38Q5 38 5 29Q5 23 7 20Z" /><circle cx="14" cy="29" r="6" /><circle cx="14" cy="27" r="3" />
                <text x="22" y="42" font-size="9" font-weight="700" fill="#5f8fc0" text-anchor="middle">2D</text>
                <path d="M12 49L15 52L18 49ZM12 91L15 94L18 91Z" fill="#999" stroke="none" /><path d="M3 56.500H29" stroke="#b5b5b5" />
                <rect x="8.500" y="65.500" width="10" height="10" fill="#b3d69b" stroke="#94bf7c" />
                <circle cx="18" cy="75" r="3.500" fill="#fff" /><path d="M20.500 77.500L24 81" stroke-width="2" />
                <circle cx="26" cy="108" r="3.500" stroke-width="1.500" /><path d="M24 108H28" />
              </svg>
            </div>
          </div>
          <div class="vbar">
            <svg class="arr" viewBox="0 0 10 10"><path d="M2 7L5 3L8 7" /></svg>
            <span class="vthumb"></span>
            <svg class="arr" viewBox="0 0 10 10"><path d="M2 3L5 7L8 3" /></svg>
          </div>
        </div>
        <div class="hbar">
          <svg class="i16" viewBox="0 0 16 16" v-html="I.glasses" />
          <svg class="i16" viewBox="0 0 16 16" v-html="I.bulb" />
          <svg class="arr left" viewBox="0 0 10 10"><path d="M7 2L3 5L7 8" /></svg>
          <span class="htrack"><span class="hthumb"></span></span>
          <svg class="arr" viewBox="0 0 10 10"><path d="M3 2L7 5L3 8" /></svg>
          <svg class="grip" viewBox="0 0 10 10"><path d="M8 2H10M5 5H7M8 5H10M2 8H4M5 8H7M8 8H10" stroke="#bbb" stroke-width="2" /></svg>
        </div>
      </section>

      <aside class="props">
        <div class="dock"><span>Propriétés</span><button aria-label="Fermer"><svg class="x" viewBox="0 0 16 16" v-html="I.close" /></button></div>
        <div class="type">
          <div class="thumb"><svg viewBox="0 0 17 17" v-html="I.sheet" /></div>
          <div class="tname"><span>Feuille</span><span>Sheet</span></div>
          <i class="caret wide"></i>
        </div>
        <div class="inst">
          <select aria-label="Filtre"><option>Feuille: Plans</option></select>
          <button class="etype"><svg class="i16" viewBox="0 0 16 16" v-html="I.etype" />Modifier le type</button>
        </div>
        <div class="ptable">
          <table>
            <colgroup><col class="c1"><col class="c2"><col></colgroup>
            <tbody>
              <template v-for="(p, pi) in props" :key="pi">
                <tr v-if="p.g" class="grp"><th colspan="2">{{ p.g }}</th><th><svg class="chev" viewBox="0 0 8 10"><path d="M1 4.500L4 1.500L7 4.500M1 8.500L4 5.500L7 8.500" fill="none" stroke="#111" stroke-width="1.300" /></svg></th></tr>
                <tr v-else :class="{ off: p.off }">
                  <td :id="'p' + pi" class="name">{{ p.n }}</td>
                  <td class="val">
                    <button v-if="p.b" class="mod">Modifier...</button>
                    <input v-else-if="p.c !== undefined" type="checkbox" :checked="!!p.c" :disabled="!!p.off" :aria-labelledby="'p' + pi">
                    <template v-else>{{ p.v }}</template>
                  </td>
                  <td></td>
                </tr>
              </template>
            </tbody>
          </table>
        </div>
        <div class="pfoot"><a href="#">Aide des propriétés</a><button disabled>Appliquer</button></div>
      </aside>
    </main>

    <footer class="status">
      <span class="msg">Fenêtres  : Fenêtre : Title w Line</span>
      <svg class="i16" viewBox="0 0 16 16" v-html="I.worker" />
      <select class="ws" aria-label="Sous-projet"><option></option></select>
      <svg class="i16" viewBox="0 0 16 16" v-html="I.paint" />
      <span class="zero">:0</span>
      <svg class="i16" viewBox="0 0 16 16" v-html="I.options" />
      <svg class="i16 ex" viewBox="0 0 16 16" v-html="I.excl" />
      <select class="model" aria-label="Variante"><option>Modèle de base</option></select>
      <div class="sico">
        <button v-for="s in ['selLink', 'selUnder', 'selPin', 'selFace', 'selDrag', 'ring']" :key="s" :aria-label="s"><svg class="i16" viewBox="0 0 16 16" v-html="I[s]" /></button>
        <button class="flt"><svg class="i16" viewBox="0 0 16 16" v-html="I.filter" />:0</button>
      </div>
    </footer>
  </div>
</template>

<style>
html, body, #app { height: 100%; }
body { margin: 0; overflow: hidden; }
</style>

<style scoped>
.app { display: flex; flex-direction: column; height: 100%; background: #eee; color: #2f2f2f; font: 12px/18px Lato, "Open Sans", sans-serif; }
.app * { box-sizing: border-box; }
button, input, select { font: inherit; color: inherit; }
button { border: 0; background: none; padding: 0; margin: 0; white-space: nowrap; }
svg { flex: none; display: block; }
.i16 { width: 16px; height: 16px; }
.i32 { width: 32px; height: 32px; }
.x { width: 13px; height: 13px; }
.caret { flex: none; display: inline-block; width: 0; height: 0; border: 3px solid transparent; border-top-color: #444; border-bottom: 0; }
.caret.wide { border-width: 4px; border-bottom: 0; }
.caret.bar { width: 8px; height: 7px; border: 0; background: linear-gradient(#333, #333) 0 0 / 8px 1px no-repeat, conic-gradient(from -45deg at 50% 100%, #333 90deg, transparent 0) 0 3px / 8px 4px no-repeat; }
.caret.bar { background: linear-gradient(#333, #333) 0 0 / 8px 1px no-repeat, linear-gradient(#333, #333) 0 3px / 8px 1px no-repeat, linear-gradient(#333, #333) 1px 4px / 6px 1px no-repeat, linear-gradient(#333, #333) 2px 5px / 4px 1px no-repeat, linear-gradient(#333, #333) 3px 6px / 2px 1px no-repeat; }

.titlebar { flex: none; display: grid; grid-template-columns: 1fr auto 1fr; height: 29px; background: #ccc; }
.logo { width: 16px; height: 18px; margin: 3px 0 0 5px; }
.titlebar h1 { margin: 0; padding-right: 46px; font-size: 12px; font-weight: 400; line-height: 20px; white-space: nowrap; }
.tools { display: flex; justify-content: flex-end; align-items: center; height: 24px; }
.play { border: 4px solid transparent; border-left-color: #333; border-right: 0; margin-right: 5px; }
.search { width: 179px; height: 22px; margin-right: 5px; padding: 0 2px; border: 1px solid #000; background: #fff; font-style: italic; }
.search::placeholder { color: #555; opacity: 1; }
.tool { display: flex; align-items: center; margin-right: 8px; }
.user { gap: 4px; width: 114px; }
.cart { padding-right: 10px; border-right: 1px solid #bbb; }
.help { gap: 7px; margin-right: 11px; }
.win { display: flex; justify-content: center; width: 25px; }

.tabs { flex: none; display: flex; height: 20px; background: #ccc; }
.tab { padding: 0 10px; line-height: 20px; }
.tab.file { width: 53px; margin-right: 2px; padding: 0; background: #2b7ab0; color: #fff; }
.tab.active { padding: 0 9px; background: #f4f4f4; color: #000; }
.tab.active ~ .tab { padding: 0 10px 0 9px; }
.collapse { display: flex; align-items: center; gap: 4px; margin-left: auto; padding-right: 2px; }
.collapse span { display: flex; align-items: center; justify-content: center; width: 15px; height: 9px; border: 1px solid #333; border-radius: 3px; background: #eee; }
.up { border: 3px solid transparent; border-bottom-color: #333; border-top: 0; }

.ribbon { flex: none; display: flex; height: 95px; background: #eee; }
.panel { display: flex; flex-direction: column; flex: none; border-right: 1px solid #d6d6d6; }
.body { display: grid; height: 75px; padding: 3px 0 0 2px; }
.sel { width: 91px; }
.sel .body { padding-left: 20px; grid-template-columns: 51px; }
.cote .body { grid-template-columns: 46px 47px 57px 114px 149px; }
.detail .body { grid-template-columns: 108px 136px; }
.texte .body { grid-template-columns: 159px; }
.etiq .body { grid-template-columns: 75px 51px 149px 134px 142px 139px; }
.motif .body { padding-left: 1px; grid-template-columns: 172px; }
.symb .body { padding-left: 3px; grid-template-columns: 50px 24px 29px; }
.panel.symb { border-right: 0; }
.big { position: relative; display: flex; flex-direction: column; align-items: center; height: 72px; padding-top: 3px; line-height: 15px; white-space: pre; text-align: center; }
.big span { margin-top: 4px; }
.big.on { border: 1px solid #3273b4; background: linear-gradient(#c3def6, #a9d1f7); padding-top: 2px; }
.big.sep { border-left: 1px solid #bbb; }
.big .caret { margin-top: 2px; }
.col { display: flex; flex-direction: column; padding-left: 5px; }
.row { display: flex; align-items: center; gap: 5px; height: 24px; white-space: pre; text-align: left; }
.row .caret { margin-left: 3px; }
.off { color: #a8a8a8; }
.ptitle { position: relative; display: flex; align-items: center; justify-content: center; gap: 6px; height: 20px; }
.launch { position: absolute; right: 4px; top: 7px; width: 7px; height: 7px; }

.qat { flex: none; display: flex; align-items: center; height: 25px; padding-left: 4px; background: #ccc; }
.q { display: flex; align-items: center; justify-content: center; width: 24px; height: 22px; }
.q.drop { justify-content: flex-start; gap: 6px; width: 36px; padding-left: 4px; }
.q.on { border: 1px solid #3273b4; background: #b4d6f5; }
.q.more { width: 16px; }
.qsep { width: 1px; height: 22px; margin: 0 3px; background: #bdbdbd; }
.options { flex: none; height: 28px; border-bottom: 2px solid #ccc; background: #eee; }

.main { flex: 1; display: flex; min-height: 0; }
.dock { flex: none; display: flex; align-items: center; justify-content: space-between; height: 20px; padding: 0 4px 0 3px; background: #eee; }
.browser { flex: none; display: flex; flex-direction: column; width: 221px; border-right: 2px solid #ccc; }
.tree { flex: 1; list-style: none; margin: 0 2px 2px 0; padding: 0; background: #fff; color: #111; }
.tree li { display: flex; align-items: center; height: 18px; white-space: nowrap; }
.guide { flex: none; }
.lab { padding: 0 3px; }
.i16 + .lab { margin-left: 3px; }
.lab.sel { width: auto; background: #dedede; }
.lab.bold { font-weight: 700; }

.doc { flex: 1; display: flex; flex-direction: column; min-width: 0; background: #fff; }
.doctabs { flex: none; display: flex; align-items: center; height: 20px; padding-right: 7px; background: #ccc; }
.doctabs > .caret { margin-left: auto; }
.dt { display: flex; align-items: center; height: 20px; padding-left: 5px; }
.dt.on { gap: 7px; width: 128px; background: #fff; font-weight: 700; }
.dt.on .x { margin-left: auto; margin-right: 4px; }
.dt.second { gap: 11px; width: 128px; }
.dt.third { gap: 7px; }
.view { flex: 1; display: flex; min-height: 0; padding: 2px 3px 0 1px; }
.sheet { position: relative; flex: 1; min-width: 0; overflow: hidden; }
.drawing { width: 100%; height: 100%; font-family: "Liberation Sans", sans-serif; }
.drawing text { fill: #000; stroke: none; }
.drawing .q-mark { fill: #eaf2fc; font-weight: 700; }
.navbar { position: absolute; top: 0; right: 0; width: 37px; height: 118px; border: 2px solid #c4c4c4; border-radius: 6px; background: #f6f6f6; }
.navbar svg { width: 33px; height: 114px; }
.navbar text { stroke: none; }
.vbar { flex: none; display: flex; flex-direction: column; justify-content: space-between; align-items: center; width: 16px; padding: 4px 0; background: #f0f0f0; }
.arr { flex: none; width: 10px; height: 10px; fill: none; stroke: #444; stroke-width: 2; }
.vthumb { width: 16px; height: 17px; background: #cdcdcd; }
.hbar { flex: none; display: flex; align-items: center; height: 16px; margin-bottom: 2px; padding-left: 3px; background: #f0f0f0; }
.hbar .i16 + .i16 { margin: 0 7px 0 5px; }
.htrack { flex: 1; display: flex; justify-content: center; height: 16px; }
.hthumb { width: 17px; height: 16px; background: #cdcdcd; }
.grip { width: 10px; height: 10px; margin: 4px 6px 0 7px; }

.props { flex: none; display: flex; flex-direction: column; width: 220px; padding-left: 2px; border-left: 2px solid #ccc; color: #111; }
.props .dock { color: #333; padding-left: 2px; padding-right: 2px; }
.type { flex: none; display: flex; align-items: center; height: 72px; padding: 0 2px 0 3px; border: 1px solid #d4d4d4; }
.type .caret { margin-left: auto; }
.thumb { display: flex; align-items: center; justify-content: center; width: 66px; height: 66px; margin-right: 3px; border: 1px solid #ccc; }
.thumb svg { width: 36px; height: 36px; }
.tname { display: flex; flex-direction: column; line-height: 16px; color: #333; }
.inst { flex: none; display: flex; align-items: center; justify-content: space-between; height: 25px; padding-right: 7px; }
select { appearance: none; border-radius: 0; background: url("data:image/svg+xml,%3Csvg xmlns='http://www.w3.org/2000/svg' width='10' height='6' fill='none' stroke='%23555'%3E%3Cpath d='M1 1L5 5L9 1'/%3E%3C/svg%3E") right 4px center no-repeat; }
.inst select { width: 98px; height: 23px; padding: 0 3px; border: 1px solid #adadad; background-color: #e1e1e1; }
.etype { display: flex; align-items: center; gap: 5px; }
.ptable { flex: 1; background: #fff; }
table { width: 100%; table-layout: fixed; border-collapse: separate; border-spacing: 0; }
.c1 { width: 103px; }
.c2 { width: 101px; }
tr { height: 18px; }
th { height: 18px; padding: 0 2px; background: #dadada; font-weight: 400; line-height: 18px; text-align: left; }
.chev { width: 8px; height: 10px; margin-left: -2px; }
td { height: 18px; padding: 0; border: 0 dotted #777; border-width: 0 1px 1px 0; line-height: 17px; white-space: pre; overflow: hidden; }
td.name { padding-left: 8px; }
td.val { padding-left: 2px; }
tr.off td { color: #777; }
.mod { display: block; width: 99px; height: 16px; margin-left: -1px; border: 1px solid #adadad; border-right-width: 2px; border-bottom-width: 2px; background: #e1e1e1; line-height: 14px; }
input[type=checkbox] { appearance: none; display: block; width: 13px; height: 13px; margin: 2px 0 0 1px; border: 1px solid #333; background: #fff; }
input[type=checkbox]:disabled { border-color: #ccc; }
input[type=checkbox]:checked { background: url("data:image/svg+xml,%3Csvg xmlns='http://www.w3.org/2000/svg' width='11' height='11' fill='none' stroke='%23333' stroke-width='1.400'%3E%3Cpath d='M2 5.500L4.500 8L9.500 2.500'/%3E%3C/svg%3E"); }
.pfoot { flex: none; display: flex; align-items: center; justify-content: space-between; height: 28px; padding: 0 2px 3px 3px; }
.pfoot a { color: #0a5bc4; }
.pfoot button { width: 73px; height: 21px; border: 1px solid #bfbfbf; background: #ccc; color: #888; }

.status { flex: none; display: flex; align-items: center; height: 24px; background: #ccc; color: #111; }
.msg { width: 834px; padding-left: 2px; white-space: pre; }
.status select { height: 19px; padding: 0 4px; border: 0; background-color: #fff; color: #777; }
.ws { width: 203px; margin: 0 10px 0 8px; }
.zero { width: 34px; margin-left: 3px; }
.ex { margin: 0 8px 0 9px; }
.model { width: 205px; }
.sico { display: flex; align-items: center; gap: 10px; margin-left: auto; padding-right: 62px; }
.flt { display: flex; align-items: center; gap: 1px; }
</style>
